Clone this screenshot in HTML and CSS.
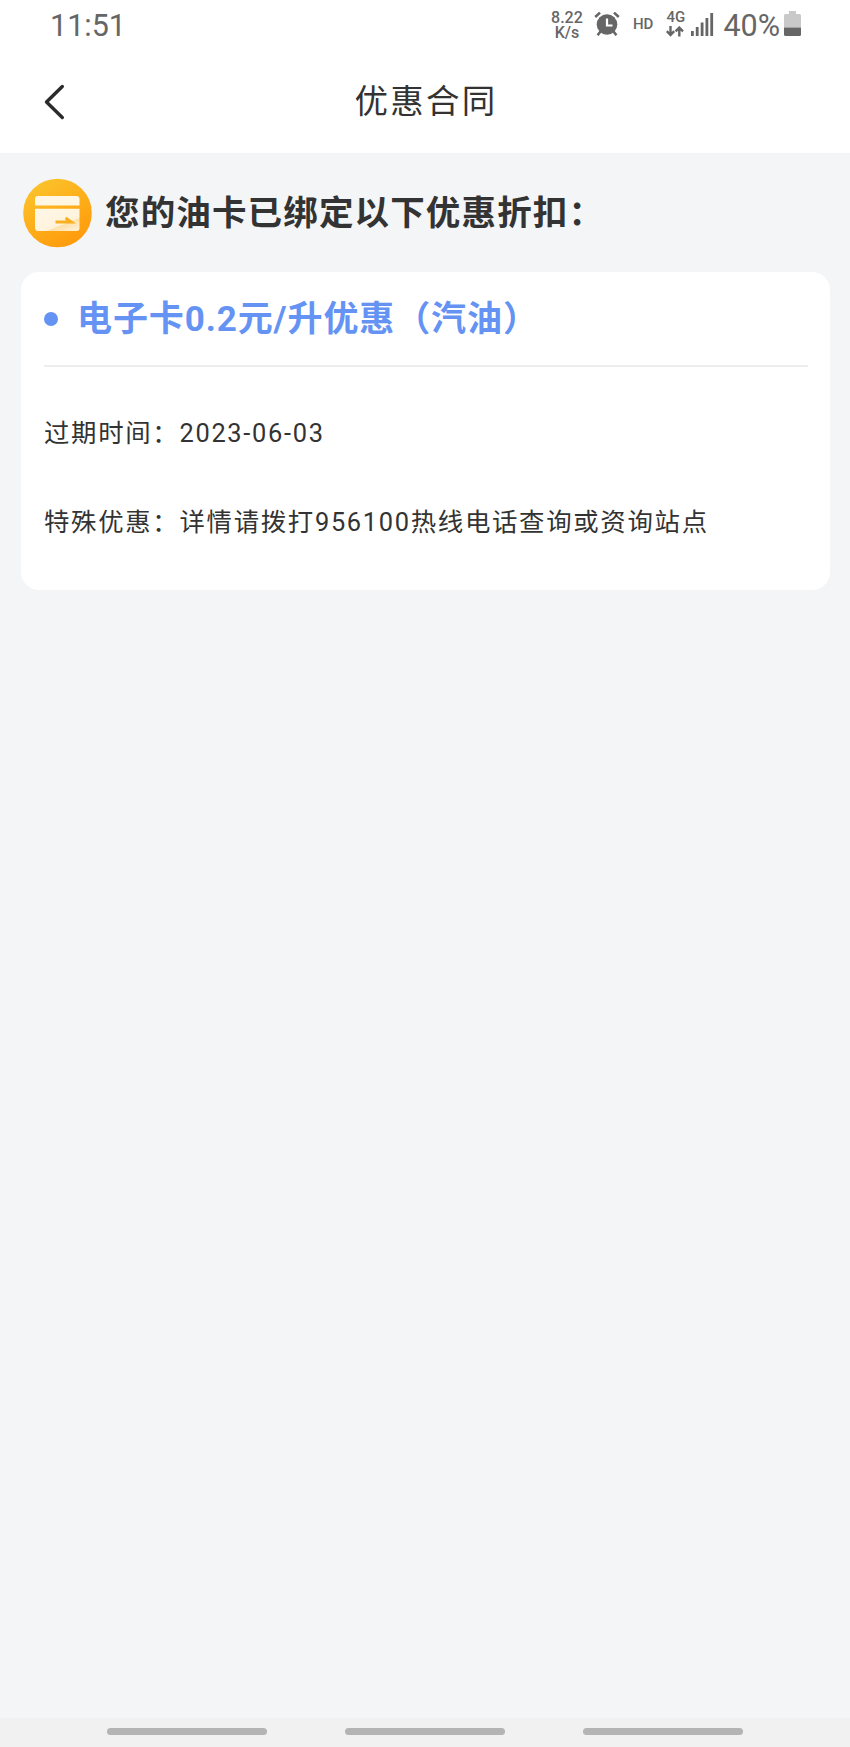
FILE: index.html
```
<!DOCTYPE html>
<html lang="zh-CN">
  <head>
    <meta charset="UTF-8" />
    <meta name="viewport" content="width=device-width, initial-scale=1.0" />
    <title>优惠合同</title>
    <link rel="stylesheet" href="styles.css" />
  </head>
  <body>
    <!-- Status bar -->
    <div class="status-bar">
      <span class="time">11:51</span>
      <div class="status-icons">
        <div class="net-speed">8.22<br />K/s</div>
        <svg class="alarm" width="26" height="26" viewBox="0 0 26 26">
          <circle cx="13" cy="13.5" r="10.3" fill="#666" />
          <path d="M1.2 6 6 1.6M24.8 6 20 1.6" stroke="#666" stroke-width="2.6" fill="none" />
          <path d="M6.5 20.5 3.6 24.2M19.5 20.5l2.9 3.7" stroke="#666" stroke-width="2.6" fill="none" />
          <path d="M13 7.5v7h5.5" stroke="#fff" stroke-width="2.2" fill="none" />
        </svg>
        <span class="hd">HD</span>
        <div class="mobile">
          <span>4G</span>
          <svg width="18" height="11" viewBox="0 0 18 11" fill="none" stroke="#666" stroke-width="2.4">
            <path d="M4.5 0v9M.8 5.2l3.7 3.8 3.7-3.8" />
            <path d="M13.3 10.5v-9M9.6 5.4l3.7-3.8L17 5.4" />
          </svg>
        </div>
        <svg class="signal" width="23" height="23" viewBox="0 0 23 23" fill="#666">
          <rect x="0" y="18" width="2.8" height="5" />
          <rect x="4.8" y="14" width="2.8" height="9" />
          <rect x="9.7" y="9.5" width="2.8" height="13.5" />
          <rect x="14.5" y="5" width="2.8" height="18" />
          <rect x="19.3" y="0" width="2.8" height="23" />
        </svg>
        <span class="percent">40%</span>
        <svg class="battery" width="17" height="26" viewBox="0 0 17 26">
          <path d="M5 0h7v3h3.500q1.500 0 1.500 1.500V16.500H0V4.500Q0 3 1.500 3H5z" fill="#c9c9c9" />
          <path d="M0 16.500h17v7q0 1.500-1.500 1.500h-14Q0 25 0 23.500z" fill="#666" />
        </svg>
      </div>
    </div>

    <!-- Title bar -->
    <header class="header">
      <svg class="back" width="22" height="36" viewBox="0 0 22 36">
        <path d="M18.300 2.500 2.500 18l15.800 15.500" fill="none" stroke="#2b2b2b" stroke-width="3.400" stroke-linecap="round" stroke-linejoin="round" />
      </svg>
      <h1>优惠合同</h1>
    </header>

    <main class="content">
      <div class="intro">
        <svg width="70" height="70" viewBox="0 0 70 70">
          <defs>
            <linearGradient id="coin" x1="0.15" y1="0" x2="0.75" y2="1">
              <stop offset="0" stop-color="#fbc52c" />
              <stop offset="1" stop-color="#ff990a" />
            </linearGradient>
            <linearGradient id="face" x1="0.2" y1="0" x2="1" y2="1">
              <stop offset="0" stop-color="#fff6e6" />
              <stop offset="0.62" stop-color="#fff3dc" />
              <stop offset="0.66" stop-color="#ffe0a8" />
              <stop offset="1" stop-color="#fff3dc" />
            </linearGradient>
          </defs>
          <circle cx="35.500" cy="35" r="34.300" fill="url(#coin)" />
          <path d="M16 18h38.500q3 0 3 3v6.500H13V21q0-3 3-3z" fill="#fff6e4" />
          <path d="M13 30.700h44.500V50q0 3-3 3H16q-3 0-3-3z" fill="url(#face)" />
          <path d="M33.500 44h16l-6-4" fill="none" stroke="#f9b020" stroke-width="2.800" />
        </svg>
        <h2>您的油卡已绑定以下优惠折扣：</h2>
      </div>

      <section class="card">
        <div class="card-title">
          <span class="dot"></span>
          <h3>电子卡0.2元/升优惠（汽油）</h3>
        </div>
        <p>过期时间：2023-06-03</p>
        <p>特殊优惠：详情请拨打956100热线电话查询或资询站点</p>
      </section>
    </main>

    <!-- System gesture hints -->
    <footer class="nav-bar">
      <span></span>
      <span></span>
      <span></span>
    </footer>
  </body>
</html>
```

FILE: styles.css
```
* {
  box-sizing: border-box;
  margin: 0;
  padding: 0;
}
body {
  display: flex;
  flex-direction: column;
  min-height: 1747px;
  background-color: #f4f5f7;
  color: #333;
  font-family: Roboto, "Noto Sans CJK SC", sans-serif;
}
svg {
  display: block;
  flex: none;
}
.status-bar {
  display: flex;
  justify-content: space-between;
  height: 50px;
  padding: 0 49px 0 50px;
  background-color: #fff;
  color: #666;
}
.time {
  font-size: 30.5px;
  line-height: 51px;
}
.status-icons {
  display: flex;
  align-items: flex-start;
}
.net-speed {
  width: 34px;
  padding-top: 10px;
  font-size: 16px;
  font-weight: 500;
  line-height: 15px;
  text-align: center;
}
.alarm {
  margin: 11px 0 0 10px;
}
.hd {
  margin-left: 13px;
  font-size: 15px;
  font-weight: 500;
  line-height: 48px;
}
.mobile {
  width: 20px;
  margin: 10px 0 0 13px;
  font-size: 15px;
  font-weight: 500;
  line-height: 15px;
}
.mobile span {
  display: block;
}
.mobile svg {
  margin-top: 1px;
}
.signal {
  margin: 13px 0 0 5px;
}
.percent {
  margin-left: 9px;
  font-size: 30.5px;
  line-height: 51px;
}
.battery {
  margin: 11px 0 0 4px;
}
.header {
  display: grid;
  grid-template-columns: 1fr auto 1fr;
  align-items: center;
  height: 103px;
  padding: 0 43px 0 44px;
  background-color: #fff;
}
.header h1 {
  padding: 0 0 6px 1px;
  font-size: 33.5px;
  font-weight: 400;
  letter-spacing: 2.3px;
}
.content {
  flex: 1;
  padding: 25px 20px 0 21px;
}
.intro {
  display: flex;
  align-items: center;
  height: 70px;
  padding-left: 1px;
}
.intro h2 {
  margin-left: 13px;
  padding-bottom: 6px;
  font-size: 34.5px;
  font-weight: 600;
  letter-spacing: 1.15px;
}
.card {
  height: 318px;
  margin-top: 24px;
  padding: 0 22px 0 23px;
  border-radius: 18px;
  background-color: #fff;
}
.card-title {
  display: flex;
  align-items: center;
  height: 95px;
  margin-bottom: 22px;
  border-bottom: 2px solid #ededed;
  color: #6593f3;
}
.dot {
  width: 14px;
  height: 14px;
  margin-right: 19px;
  border-radius: 50%;
  background-color: #6593f3;
}
.card-title h3 {
  padding-bottom: 7px;
  font-size: 35px;
  font-weight: 700;
  letter-spacing: 0.9px;
}
.card p {
  font-size: 25.4px;
  line-height: 89px;
  letter-spacing: 1.7px;
  white-space: nowrap;
}
.nav-bar {
  display: flex;
  justify-content: space-between;
  height: 29px;
  padding: 10px 107px 0;
  background-color: #f1f1f1;
}
.nav-bar span {
  width: 160px;
  height: 7px;
  border-radius: 4px;
  background-color: #b4b4b4;
}
```
